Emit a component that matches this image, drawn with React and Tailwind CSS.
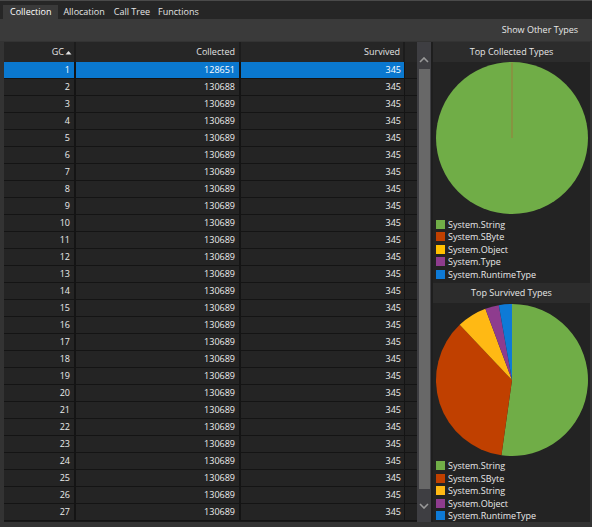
import React from 'react'

const rows = Array.from({ length: 27 }, (_, i) => ({
  gc: i + 1,
  collected: i === 0 ? 128651 : i === 1 ? 130688 : 130689,
  survived: 345,
}))

const collectedLegend = [
  ['System.String', '#70ad47'],
  ['System.SByte', '#c04000'],
  ['System.Object', '#ffc000'],
  ['System.Type', '#8e3c8e'],
  ['System.RuntimeType', '#0e7ad6'],
]

const survivedLegend = [
  ['System.String', '#70ad47'],
  ['System.SByte', '#c04000'],
  ['System.String', '#ffb914'],
  ['System.Object', '#8e3c8e'],
  ['System.RuntimeType', '#0e7ad6'],
]

// degrees, clockwise from 12 o'clock
const survivedSlices = [
  [0, 188, '#70ad47'],
  [188, 316.5, '#c04000'],
  [316.5, 339.5, '#ffb914'],
  [339.5, 350, '#8e3c8e'],
  [350, 360, '#0e7ad6'],
]

function pt(cx, cy, r, deg) {
  const a = (deg - 90) * Math.PI / 180
  return [cx + r * Math.cos(a), cy + r * Math.sin(a)]
}

function slicePath(cx, cy, r, a0, a1) {
  const [x0, y0] = pt(cx, cy, r, a0)
  const [x1, y1] = pt(cx, cy, r, a1)
  const large = a1 - a0 > 180 ? 1 : 0
  return `M${cx} ${cy} L${x0} ${y0} A${r} ${r} 0 ${large} 1 ${x1} ${y1} Z`
}

function Legend({ items }) {
  return (
    <div className="flex flex-col pl-[3px]">
      {items.map(([label, color], i) => (
        <div key={i} className="flex items-center h-[12.5px] gap-[3px]">
          <span className="w-[9px] h-[9px] shrink-0" style={{ background: color }} />
          <span className="text-[#e8e8e8]">{label}</span>
        </div>
      ))}
    </div>
  )
}

function ChartTitle({ children }) {
  return (
    <div className="h-[20px] bg-[#2c2c2c] flex items-center justify-center text-[#e6e6e6]">
      {children}
    </div>
  )
}

export default function App() {
  return (
    <div
      className="w-[592px] h-[527px] bg-[#333333] flex flex-col text-[9px] overflow-hidden"
      style={{ fontFamily: '"Open Sans", "Noto Sans", sans-serif' }}
    >
      {/* tabs */}
      <div className="h-[19px] bg-[#262626] border-t border-[#4a4a4a] flex items-end pl-[3px] shrink-0">
        <div className="h-[14px] px-[7px] bg-[#3a3a3a] text-white flex items-center">Collection</div>
        <div className="h-[14px] pl-[5px] pr-[5px] text-[#e4e4e4] flex items-center">Allocation</div>
        <div className="h-[14px] px-[4px] text-[#e4e4e4] flex items-center">Call Tree</div>
        <div className="h-[14px] px-[4px] text-[#e4e4e4] flex items-center">Functions</div>
      </div>

      {/* toolbar */}
      <div className="h-[22px] bg-[#3a3a3a] flex items-center justify-end pr-[14px] text-[#e8e8e8] shrink-0">
        Show Other Types
      </div>

      <div className="flex-1 flex pl-[4px] pr-[2px] pt-[1px] pb-[5px] min-h-0">
        {/* grid */}
        <div className="w-[413px] flex flex-col bg-[#181818]">
          <div className="h-[20px] flex bg-[#262626] text-[#e2e2e2] shrink-0">
            <div className="w-[72px] border-r-2 border-[#1c1c1c] flex items-center justify-end pr-[2px] gap-[1px]">
              GC
              <svg width="7" height="5" viewBox="0 0 7 5"><path d="M0.5 4.5 L3.5 1 L6.5 4.5 Z" fill="#e2e2e2" /></svg>
            </div>
            <div className="w-[165px] border-r-2 border-[#1c1c1c] flex items-center justify-end pr-[4px]">Collected</div>
            <div className="w-[164px] border-r-2 border-[#1c1c1c] flex items-center justify-end pr-[3px]">Survived</div>
            <div className="flex-1" />
          </div>
          {rows.map((r, i) => {
            const sel = i === 0
            const cell = sel ? 'bg-[#0a78cf] text-white' : 'bg-[#242424] text-[#ececec]'
            return (
              <div key={r.gc} className="h-[17px] flex shrink-0">
                <div className={`w-[72px] border-r-2 border-b border-[#141414] flex items-center justify-end pr-[4px] ${cell}`}>{r.gc}</div>
                <div className={`w-[165px] border-r-2 border-b border-[#141414] flex items-center justify-end pr-[4px] ${cell}`}>{r.collected}</div>
                <div className={`w-[164px] border-r border-b border-[#141414] flex items-center justify-end pr-[3px] ${cell}`}>{r.survived}</div>
                <div className="flex-1 bg-[#222222] border-b border-[#141414]" />
              </div>
            )
          })}
        </div>

        {/* scrollbar */}
        <div className="w-[14px] bg-[#3e3e42] flex flex-col items-center">
          <div className="h-[27px] flex items-end justify-center pb-[6px]">
            <svg width="10" height="6" viewBox="0 0 10 6"><path d="M1 5 L5 1 L9 5" stroke="#9a9a9a" strokeWidth="1.6" fill="none" /></svg>
          </div>
          <div className="w-[11px] h-[420px] bg-[#686868]" />
          <div className="flex-1 flex items-center justify-center">
            <svg width="10" height="6" viewBox="0 0 10 6"><path d="M1 1 L5 5 L9 1" stroke="#9a9a9a" strokeWidth="1.6" fill="none" /></svg>
          </div>
        </div>

        {/* charts */}
        <div className="flex-1 flex flex-col bg-[#232323] border-l-2 border-[#1e1e1e]">
          <ChartTitle>Top Collected Types</ChartTitle>
          <div className="h-[152px] flex justify-center">
            <svg width="154" height="152" viewBox="0 0 154 152">
              <circle cx="77" cy="76" r="76" fill="#70ad47" />
              <line x1="77" y1="76" x2="77" y2="0.5" stroke="#a8703a" strokeWidth="0.8" />
            </svg>
          </div>
          <div className="h-[4px]" />
          <Legend items={collectedLegend} />
          <div className="h-[2px]" />
          <ChartTitle>Top Survived Types</ChartTitle>
          <div className="h-[153px] flex justify-center pt-[1px]">
            <svg width="154" height="152" viewBox="0 0 154 152">
              {survivedSlices.map(([a0, a1, c], i) => (
                <path key={i} d={slicePath(77, 76, 76, a0, a1)} fill={c} />
              ))}
            </svg>
          </div>
          <div className="h-[4px]" />
          <Legend items={survivedLegend} />
        </div>
      </div>
    </div>
  )
}
